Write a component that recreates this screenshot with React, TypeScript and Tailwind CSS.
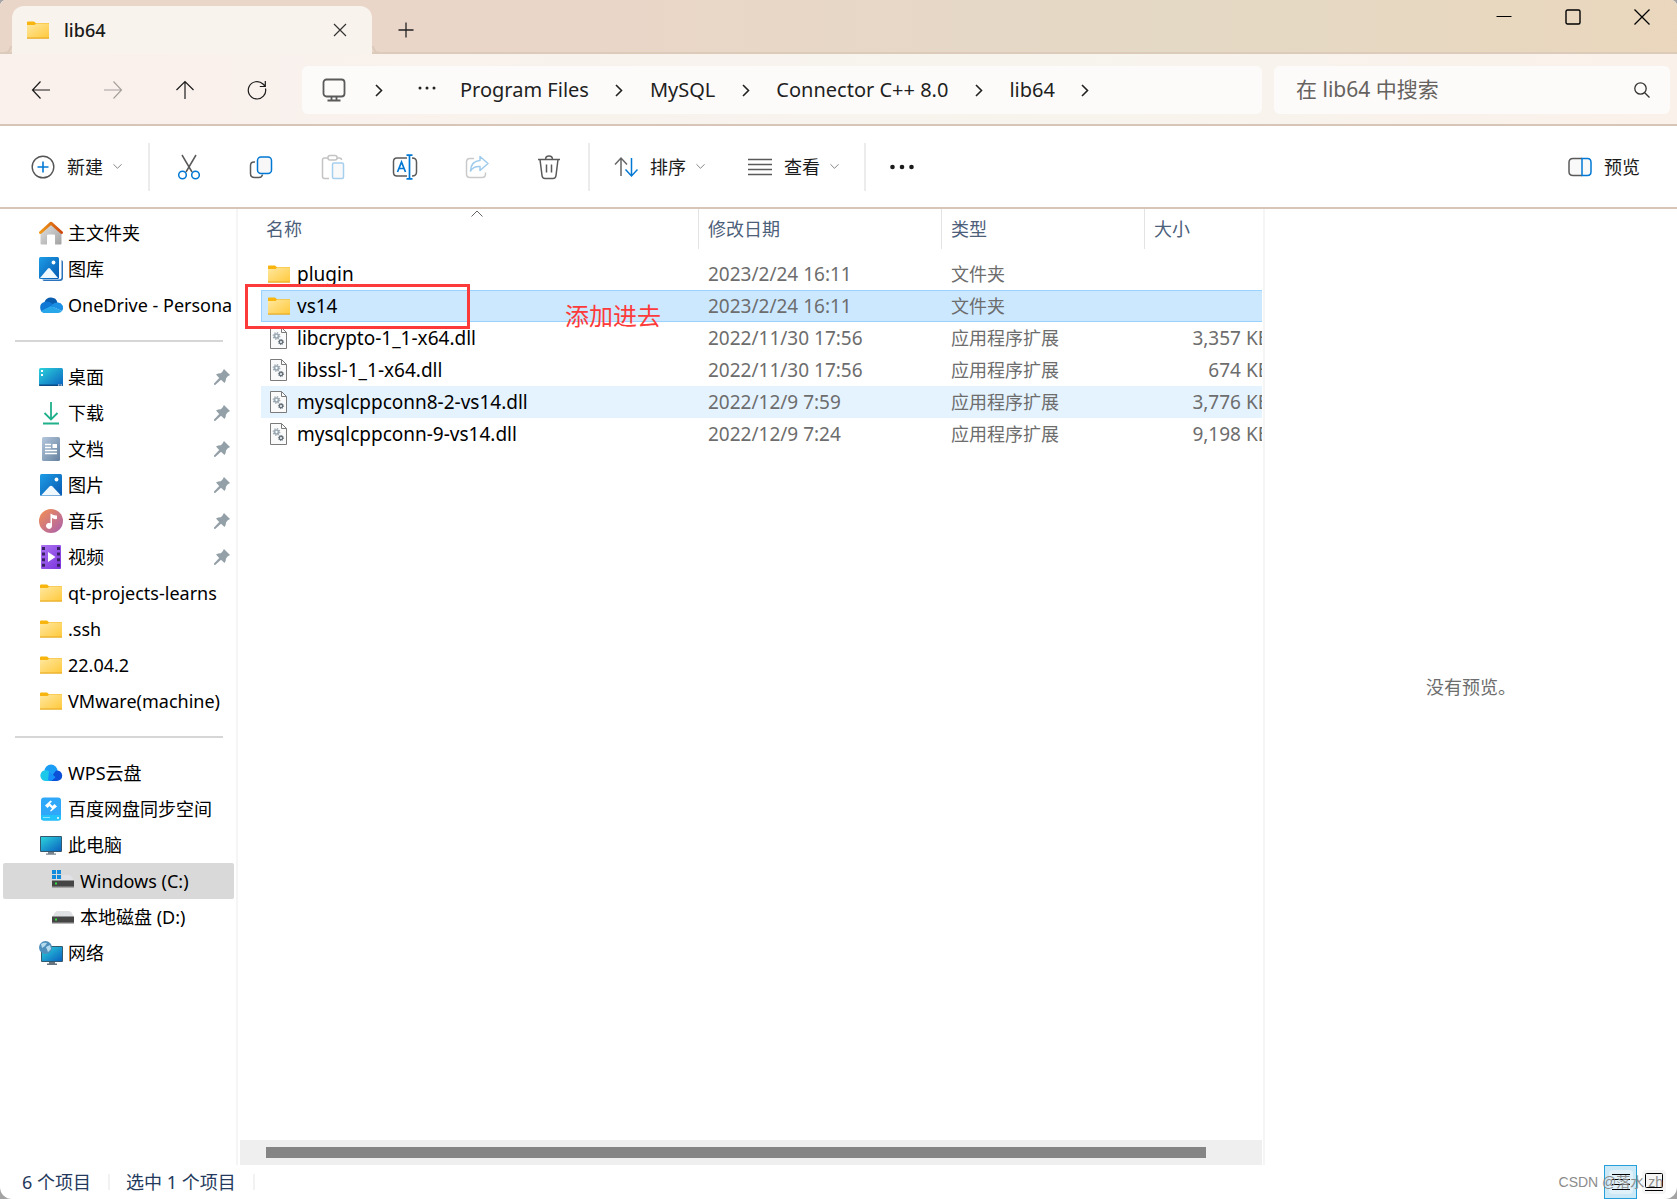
import { ReactNode } from "react";
import clsx from "clsx";

type IconProps = { className?: string };

type SideItem = {
  label: string;
  icon: ReactNode;
  pinned?: boolean;
  nested?: boolean;
  active?: boolean;
};

type FileRow = {
  name: string;
  date: string;
  type: string;
  size?: string;
  state?: "selected" | "hover";
};

const FolderIcon = ({ className = "w-6 h-6" }: IconProps) => (
  <svg viewBox="0 0 24 24" className={clsx("shrink-0", className)}>
    <defs>
      <linearGradient id="folder" x1="0" y1="0" x2="1" y2="1">
        <stop offset="0" stopColor="#ffe8a0" />
        <stop offset="1" stopColor="#ffc93c" />
      </linearGradient>
    </defs>
    <path d="M1 4.5Q1 3.5 2 3.5H8L10 5.2H23V9H1Z" fill="#f8b50f" />
    <path d="M1 7H8.5L10 5.8H23V20H1Z" fill="url(#folder)" />
    <path d="M1 19.5H23V20.7H1Z" fill="#e8a91c" />
  </svg>
);

const HomeIcon = () => (
  <svg viewBox="0 0 24 24" className="w-6 h-6 shrink-0">
    <defs>
      <linearGradient id="roof">
        <stop offset="0" stopColor="#f09a1a" />
        <stop offset="1" stopColor="#cf4a10" />
      </linearGradient>
      <linearGradient id="wall" x1="0" y1="0" x2="1" y2="1">
        <stop offset="0" stopColor="#e2e2e2" />
        <stop offset="1" stopColor="#a2a2a2" />
      </linearGradient>
    </defs>
    <path d="M1.5 12 12 2.5 22.5 12V22.5Q22.5 23.5 21.5 23.5H16V14.5Q16 13.5 15 13.5H9Q8 13.5 8 14.5V23.5H2.5Q1.5 23.5 1.5 22.5Z" fill="url(#wall)" />
    <path d="M1.5 11.5 12 2.2 22.5 11.5" fill="none" stroke="url(#roof)" strokeWidth="3" strokeLinecap="round" strokeLinejoin="round" />
  </svg>
);

const PictureIcon = ({ stacked = false }: { stacked?: boolean }) => (
  <svg viewBox="0 0 24 24" className="w-6 h-6 shrink-0">
    <defs>
      <linearGradient id="picture" x1="0" y1="0" x2="1" y2="1">
        <stop offset="0" stopColor="#1e9de6" />
        <stop offset="1" stopColor="#0658b0" />
      </linearGradient>
    </defs>
    {stacked && <path d="M3.5 23Q4 24 5.5 24H21Q24 24 24 21V5Q24 3.5 22.5 3V20Q22.5 22.5 20 22.5H3.5Z" fill="#2b74bd" />}
    <g transform={stacked ? "translate(-1 -1)" : undefined}>
      <rect x="1" y="1" width={stacked ? 20 : 22} height="22" rx="1.5" fill="url(#picture)" />
      <path d={stacked ? "M2 22 10 12.5Q11 11.5 12 12.5L20 22Z" : "M2 22.5 10.5 13.5Q12 12 13.5 13.5L22 22.5Z"} fill="#f0f8ff" />
      <circle cx={stacked ? 15.5 : 17.5} cy="6.5" r="1.9" fill="#fff" />
    </g>
  </svg>
);

const OneDriveIcon = () => (
  <svg viewBox="0 0 24 24" className="w-6 h-6 shrink-0">
    <path d="M5.5 9A6.800 6.800 0 0 1 18.5 9.500L12 15Z" fill="#0a5cae" />
    <path d="M5.5 9Q9 7.800 12 10L17 13 6 20A5.600 5.600 0 0 1 5.500 9Z" fill="#0f78d4" />
    <path d="M12.5 12.5Q15 9 19 9.500A5.300 5.300 0 0 1 23 18L14 14Z" fill="#1a8fe3" />
    <path d="M2 18 12 13 23 18Q21.5 20 19 20H6Q3.5 20 2 18Z" fill="#28a6ea" />
  </svg>
);

const DesktopIcon = () => (
  <svg viewBox="0 0 24 24" className="w-6 h-6 shrink-0">
    <defs>
      <linearGradient id="screen" x1="0" y1="0" x2="1" y2="1">
        <stop offset="0" stopColor="#2cd3dc" />
        <stop offset="1" stopColor="#0a62c0" />
      </linearGradient>
    </defs>
    <rect y="3" width="24" height="18" rx="1.5" fill="url(#screen)" />
    <path d="M0 19.5H24V20Q24 21 23 21H1Q0 21 0 20Z" fill="#0b4b87" />
    <path d="M2 5H4V7H2ZM2 9H4V11H2ZM19 19.5H20.5V20.5H19ZM21.5 19.5H23V20.5H21.5Z" fill="#fff" />
  </svg>
);

const DownloadIcon = () => (
  <svg viewBox="0 0 24 24" className="w-6 h-6 shrink-0" fill="none" stroke="#20b08c" strokeWidth="1.8">
    <path d="M12 1V18M5.5 12 12 18.5 18.5 12M4 22.5H20" />
  </svg>
);

const DocumentIcon = () => (
  <svg viewBox="0 0 24 24" className="w-6 h-6 shrink-0">
    <defs>
      <linearGradient id="document" x1="0" y1="0" x2="1" y2="1">
        <stop offset="0" stopColor="#b4c7dc" />
        <stop offset="1" stopColor="#64809f" />
      </linearGradient>
    </defs>
    <rect x="3" width="18" height="24" rx="1.5" fill="url(#document)" />
    <path d="M6 7.5H12M6 10.5H12M6 13.5H18M6 16.5H18" stroke="#fff" strokeWidth="1.3" />
    <rect x="13.5" y="7" width="4.5" height="4" fill="#fff" />
  </svg>
);

const MusicIcon = () => (
  <svg viewBox="0 0 24 24" className="w-6 h-6 shrink-0">
    <defs>
      <linearGradient id="music" x1="0" y1="0" x2="1" y2="1">
        <stop offset="0" stopColor="#f59150" />
        <stop offset="1" stopColor="#a85fb0" />
      </linearGradient>
    </defs>
    <circle cx="12" cy="12" r="12" fill="url(#music)" />
    <path d="M11.5 4.5Q15 7 18 6.5V10Q15 10.5 13 9V17A3 3 0 1 1 11.5 14.3Z" fill="#fff" />
  </svg>
);

const VideoIcon = () => (
  <svg viewBox="0 0 24 24" className="w-6 h-6 shrink-0">
    <defs>
      <linearGradient id="video" x1="0" y1="0" x2="1" y2="1">
        <stop offset="0" stopColor="#ad74f2" />
        <stop offset="1" stopColor="#7a34dd" />
      </linearGradient>
    </defs>
    <rect x="2" width="20" height="24" rx="1" fill="url(#video)" />
    <path d="M4.5 2V22M19.5 2V22" stroke="#3a2065" strokeWidth="3" strokeDasharray="3 2.6" />
    <path d="M9 7 16.5 12 9 17Z" fill="#fff" />
  </svg>
);

const WpsIcon = () => (
  <svg viewBox="0 0 24 24" className="w-6 h-6 shrink-0">
    <circle cx="12" cy="10" r="6.5" fill="#1a9df5" />
    <path d="M9 20 17 9.5A5.3 5.3 0 1 1 17.5 20Z" fill="#0c50d8" />
    <path d="M6.5 20A5.4 5.4 0 1 1 11.5 12L16 16Q13 20 9.5 20Z" fill="#1cc8ea" />
    <path d="M10 10.5 16.5 16.5 12 20 9 19Z" fill="#1690fa" />
  </svg>
);

const BaiduIcon = () => (
  <svg viewBox="0 0 24 24" className="w-6 h-6 shrink-0">
    <rect x="2" y="0.5" width="20" height="23" rx="3" fill="#2fa8fa" />
    <path d="M2 18H22V21Q22 23.5 19.5 23.5H4.5Q2 23.5 2 21Z" fill="#22c3fb" />
    <path d="M11.5 3.5 6 8.5 8.500 11 10.500 9 13 11.500 11 14 12 14.500 18 9.500 15.500 7 13.500 9 11 6.500 13 4.500Z" fill="#fff" />
    <path d="M4 20.5H11" stroke="#8fe4ff" />
    <circle cx="19" cy="21" r="1" fill="#fff" />
  </svg>
);

const ComputerIcon = () => (
  <svg viewBox="0 0 24 24" className="w-6 h-6 shrink-0">
    <path d="M9 18H15V20.5H17V21.7H7V20.5H9Z" fill="#77848f" />
    <rect x="1" y="3" width="22" height="16" rx="1" fill="#35586f" />
    <rect x="2" y="4" width="20" height="14" fill="url(#screen)" />
  </svg>
);

const DriveIcon = ({ system = false }: { system?: boolean }) => (
  <svg viewBox="0 0 24 24" className="w-6 h-6 shrink-0">
    <path d="M6 6H18Q19.5 6 20.5 7.5L23 12H1L4 7.5Q5 6 6 6Z" fill="#dfe1e4" />
    <rect x="1" y="11.5" width="22" height="6.5" fill="#454545" />
    <path d="M1 17H23V18.5H1Z" fill="#737373" />
    <rect x="4" y="13.5" width="2" height="2" fill="#30e040" />
    {system && (
      <>
        <path d="M0 0H11V10H0Z" fill="#d9d9d9" />
        <path d="M1 1H5V5H1ZM6 1H10V5H6ZM1 6H5V10H1ZM6 6H10V10H6Z" fill="#118cdc" />
      </>
    )}
  </svg>
);

const NetworkIcon = () => (
  <svg viewBox="0 0 24 24" className="w-6 h-6 shrink-0">
    <path d="M10 20H16V22.5H18V24H8V22.5H10Z" fill="#66747f" />
    <rect x="2" y="5" width="22" height="16" rx="1" fill="#345a70" />
    <rect x="3" y="6" width="20" height="14" fill="url(#screen)" />
    <circle cx="6.5" cy="6.5" r="6.5" fill="#4e8fbb" />
    <path d="M2 3Q5 1 8 2L6 5 3 7ZM7 6 11 4 12 8 9 11Z" fill="#b5dcee" />
  </svg>
);

const PinIcon = () => (
  <svg viewBox="0 0 16 16" className="w-4 h-4 shrink-0" fill="#94a0a8">
    <path d="M10 0 16 6 13.5 7.5 12 9.5Q12 12.5 10.5 14L7 10.8 1.2 16 0 15.8V14.5L5.2 9 2 5.5Q4 4.2 6.8 4.2L8.5 2.5Z" />
  </svg>
);

const DllIcon = () => (
  <svg viewBox="0 0 24 24" className="w-6 h-6 shrink-0" fill="none">
    <path d="M3.5 1.5H14.5L19.5 6.5V22.5H3.5Z" fill="#fafafa" stroke="#7b7b7b" />
    <path d="M14.5 1.5V6.5H19.5" stroke="#7b7b7b" />
    <circle cx="9.500" cy="10" r="2" stroke="#9aa8b3" strokeWidth="1.700" />
    <circle cx="9.500" cy="10" r="3.300" stroke="#9aa8b3" strokeWidth="1.200" strokeDasharray="1.300 1.290" />
    <circle cx="14" cy="16" r="1.700" stroke="#64707a" strokeWidth="1.400" />
    <circle cx="14" cy="16" r="2.600" stroke="#64707a" strokeDasharray="1.020 1.020" />
  </svg>
);

const ChevronDown = () => (
  <svg viewBox="0 0 10 10" className="w-[9px] h-[9px] shrink-0" fill="none" stroke="#777">
    <path d="M0.5 2.5 5 7 9.5 2.5" />
  </svg>
);

const Crumb = ({ label }: { label: string }) => (
  <>
    <button className="whitespace-nowrap">{label}</button>
    <button aria-label="展开" className="w-[61px] flex justify-center">
      <svg viewBox="0 0 8 14" className="w-2 h-3.5" fill="none" stroke="#222" strokeWidth="1.6">
        <path d="M1 2 6.5 7.5 1 13" />
      </svg>
    </button>
  </>
);

const NavButton = ({ label, disabled, children }: { label: string; disabled?: boolean; children: ReactNode }) => (
  <button aria-label={label} disabled={disabled} className="w-[72px] h-12 flex items-center justify-center text-[#1b1b1b] disabled:text-[#a6a09c]">
    <svg viewBox="0 0 20 20" className="w-5 h-5" fill="none" stroke="currentColor" strokeWidth="1.2">
      {children}
    </svg>
  </button>
);

const ToolButton = ({ label, children }: { label: string; children: ReactNode }) => (
  <button aria-label={label} className="w-[72px] h-12 flex items-center justify-center">
    <svg viewBox="0 0 26 26" className="w-[26px] h-[26px]" fill="none" stroke="#5a5a5a" strokeWidth="1.5">
      {children}
    </svg>
  </button>
);

const Divider = () => <span className="w-0.5 h-12 bg-[#ececec] shrink-0" />;

const TitleBar = () => (
  <header className="flex h-[54px] pl-3 border-b-2 border-[#dccabb] bg-linear-to-r from-[#ead6c8] from-35% via-[#e4d9c5] via-70% to-[#ead7bd]">
    <div className="relative mt-1.5 h-12 w-[360px] shrink-0 flex items-center pl-3.5 pr-[25px] rounded-t-xl bg-[#f9f3ed] before:absolute before:right-full before:bottom-0 before:size-2 before:rounded-br-lg before:border-b-2 before:border-r-2 before:border-[#dccabb] after:absolute after:left-full after:bottom-0 after:size-2 after:rounded-bl-lg after:border-b-2 after:border-l-2 after:border-[#dccabb]">
      <FolderIcon />
      <span className="ml-3.5 flex-1 text-lg font-medium text-[#1b1b1b]">lib64</span>
      <button aria-label="关闭标签页">
        <svg viewBox="0 0 14 14" className="w-3.5 h-3.5" stroke="#333" strokeWidth="1.2">
          <path d="M1 1 13 13M13 1 1 13" />
        </svg>
      </button>
    </div>
    <button aria-label="新建标签页" className="ml-[26px] mt-2">
      <svg viewBox="0 0 16 16" className="w-4 h-4" stroke="#222" strokeWidth="1.3">
        <path d="M8 0.5V15.5M0.5 8H15.5" />
      </svg>
    </button>
    <div className="ml-auto flex h-[33px]">
      <button aria-label="最小化" className="w-[70px] flex items-center justify-center">
        <svg viewBox="0 0 16 16" className="w-4 h-4" stroke="#000">
          <path d="M0.5 7.5H15.5" />
        </svg>
      </button>
      <button aria-label="最大化" className="w-[68px] flex items-center justify-center">
        <svg viewBox="0 0 16 16" className="w-4 h-4" fill="none" stroke="#000" strokeWidth="1.4">
          <rect x="1" y="1" width="14" height="14" rx="1.5" />
        </svg>
      </button>
      <button aria-label="关闭" className="w-[70px] flex items-center justify-center">
        <svg viewBox="0 0 16 16" className="w-4 h-4" stroke="#000" strokeWidth="1.3">
          <path d="M0.5 0.5 15.5 15.5M15.5 0.5 0.5 15.5" />
        </svg>
      </button>
    </div>
  </header>
);

const NavBar = () => (
  <nav className="flex items-center h-[72px] pt-0.5 pl-[5px] pr-[7px] border-b-2 border-[#d7c5b7] bg-linear-to-r from-[#faf0ec] via-[#f7f4ee] via-60% to-[#faf1ea]">
    <NavButton label="后退">
      <path d="M19 10H1.5M9.5 1.5 1.5 10 9.5 18.5" />
    </NavButton>
    <NavButton label="前进" disabled>
      <path d="M1 10H18.5M10.5 1.5 18.5 10 10.5 18.5" />
    </NavButton>
    <NavButton label="向上">
      <path d="M10 19V1.5M1.5 10 10 1.5 18.5 10" />
    </NavButton>
    <NavButton label="刷新">
      <path d="M18.5 8.5A8.7 8.7 0 1 1 16 4L18 6M18.3 1V6.5H12.8" />
    </NavButton>
    <div className="ml-[9px] mr-3 h-12 flex-1 min-w-0 flex items-center pl-5 rounded-md bg-[#fcfbf9] text-xl text-[#1f1f1f] overflow-hidden">
      <svg viewBox="0 0 24 24" className="w-6 h-6 shrink-0" fill="none" stroke="#5a5a5a" strokeWidth="1.8">
        <rect x="1.5" y="1.5" width="21" height="17" rx="3" />
        <path d="M9.5 19V22M14.5 19V22M5.5 22.5H18.5" />
      </svg>
      <button aria-label="展开" className="w-[66px] flex justify-center shrink-0">
        <svg viewBox="0 0 8 14" className="w-2 h-3.5" fill="none" stroke="#222" strokeWidth="1.6">
          <path d="M1 2 6.5 7.5 1 13" />
        </svg>
      </button>
      <button aria-label="更多路径" className="w-12 pl-1.5 shrink-0">
        <svg viewBox="0 0 18 4" className="w-[18px] h-1 mb-1" fill="#222">
          <circle cx="2" cy="2" r="1.5" />
          <circle cx="9" cy="2" r="1.5" />
          <circle cx="16" cy="2" r="1.5" />
        </svg>
      </button>
      <Crumb label="Program Files" />
      <Crumb label="MySQL" />
      <Crumb label="Connector C++ 8.0" />
      <Crumb label="lib64" />
    </div>
    <label className="h-12 w-[396px] flex items-center pl-[22px] pr-5 rounded-md bg-[#fcfbf9]">
      <input aria-label="搜索" placeholder="在 lib64 中搜索" className="flex-1 min-w-0 bg-transparent text-[21px] outline-none placeholder:text-[#66625f]" />
      <svg viewBox="0 0 16 16" className="w-4 h-4" fill="none" stroke="#333" strokeWidth="1.3">
        <circle cx="6.5" cy="6.5" r="5.7" />
        <path d="M10.7 10.7 15.5 15.5" />
      </svg>
    </label>
  </nav>
);

const ToolBar = () => (
  <div className="flex items-center h-[83px] pl-[31px] pr-8 border-b-2 border-[#d7c5b7] bg-white text-lg text-[#1b1b1b]">
    <button className="flex items-center h-12 w-[117px] whitespace-nowrap">
      <svg viewBox="0 0 24 24" className="w-6 h-6" fill="none" strokeWidth="1.4">
        <circle cx="12" cy="12" r="10.8" stroke="#555" />
        <path d="M12 6.5V17.5M6.5 12H17.5" stroke="#0078d4" strokeWidth="1.6" />
      </svg>
      <span className="ml-3 mr-2.5">新建</span>
      <ChevronDown />
    </button>
    <Divider />
    <div className="flex ml-[3px] mr-[3px]">
      <ToolButton label="剪切">
        <path d="M6 1 16 18M20 1 10 18" />
        <circle cx="6.5" cy="21" r="3.8" stroke="#0078d4" fill="#fff" />
        <circle cx="19.5" cy="21" r="3.8" stroke="#0078d4" fill="#fff" />
      </ToolButton>
      <ToolButton label="复制">
        <path d="M7 8H6Q2.5 8 2.5 11.5V19.5Q2.5 23.5 6.5 23.5H11Q14 23.5 14.5 20.5" />
        <rect x="9.5" y="3" width="14" height="16.5" rx="3.5" stroke="#0078d4" fill="#f7f7f7" />
      </ToolButton>
      <ToolButton label="粘贴">
        <g stroke="#c4c4c4">
          <path d="M8 4H4.5Q2.5 4 2.5 6V22.5Q2.5 24.5 4.5 24.5H9M17 4H19.5Q21.5 4 21.5 6" />
          <rect x="8" y="1.5" width="9" height="4.5" rx="2" />
        </g>
        <rect x="12.5" y="9" width="11" height="15.5" rx="1.5" stroke="#a6cfee" fill="#f9f9f9" />
      </ToolButton>
      <ToolButton label="重命名">
        <path d="M15 4H5Q1.5 4 1.5 7.5V18.5Q1.5 22 5 22H15M20 4Q24.5 4 24.5 8V18Q24.5 22 20 22" />
        <path d="M5.5 18 9.5 8 13.5 18M7 14.5H12M17.5 1V25M14.5 1.2H20.5M14.5 24.8H20.5" stroke="#0078d4" strokeWidth="1.7" />
      </ToolButton>
      <ToolButton label="共享">
        <path d="M10 4.5H6Q2.5 4.5 2.5 8V20Q2.5 23.5 6 23.5H18Q21.5 23.5 21.5 20V18.5" stroke="#c9c9c9" />
        <path d="M16 2.5 24 9.5 16 16.5V12.5Q9.5 12 6.5 17Q7 7 16 6.5Z" stroke="#9fcbec" strokeLinejoin="round" />
      </ToolButton>
      <ToolButton label="删除">
        <path d="M2 5.5H24M9.5 5.5Q9.5 2 13 2T16.5 5.5M4 5.5 6 21.5Q6.3 24.5 9 24.5H17Q19.7 24.5 20 21.5L22 5.5M10.5 10.5V18.5M15.5 10.5V18.5" />
      </ToolButton>
    </div>
    <Divider />
    <button className="flex items-center h-12 ml-6 w-[134px] whitespace-nowrap">
      <svg viewBox="0 0 24 24" className="w-6 h-6" fill="none" strokeWidth="1.5">
        <path d="M7 21V3M1 9.5 7 3 13 9.5" stroke="#666" />
        <path d="M17.5 3V21M11.5 14.5 17.5 21 23.5 14.5" stroke="#0078d4" />
      </svg>
      <span className="ml-3 mr-2.5">排序</span>
      <ChevronDown />
    </button>
    <button className="flex items-center h-12 w-[116px] whitespace-nowrap">
      <svg viewBox="0 0 24 24" className="w-6 h-6" stroke="#5a5a5a" strokeWidth="1.3">
        <path d="M0 4.5H24M0 9.5H24M0 14.5H24M0 19.5H24" />
      </svg>
      <span className="ml-3 mr-2.5">查看</span>
      <ChevronDown />
    </button>
    <Divider />
    <button aria-label="更多" className="ml-6 h-12">
      <svg viewBox="0 0 24 6" className="w-6 h-1.5" fill="#1b1b1b">
        <circle cx="2.5" cy="3" r="2.3" />
        <circle cx="12" cy="3" r="2.3" />
        <circle cx="21.5" cy="3" r="2.3" />
      </svg>
    </button>
    <button className="ml-auto mr-[5px] flex items-center h-12 whitespace-nowrap">
      <svg viewBox="0 0 24 24" className="w-6 h-6" fill="#f9f9f9" strokeWidth="1.5">
        <path d="M14 3.5H5Q1 3.5 1 7.5V16.5Q1 20.5 5 20.5H14" stroke="#5a5a5a" />
        <path d="M14 3.5H19.5Q23 3.5 23 7.5V16.5Q23 20.5 19.5 20.5H14Z" stroke="#0078d4" />
      </svg>
      <span className="ml-3">预览</span>
    </button>
  </div>
);

const sideGroups: SideItem[][] = [
  [
    { label: "主文件夹", icon: <HomeIcon /> },
    { label: "图库", icon: <PictureIcon stacked /> },
    { label: "OneDrive - Persona", icon: <OneDriveIcon /> },
  ],
  [
    { label: "桌面", icon: <DesktopIcon />, pinned: true },
    { label: "下载", icon: <DownloadIcon />, pinned: true },
    { label: "文档", icon: <DocumentIcon />, pinned: true },
    { label: "图片", icon: <PictureIcon />, pinned: true },
    { label: "音乐", icon: <MusicIcon />, pinned: true },
    { label: "视频", icon: <VideoIcon />, pinned: true },
    { label: "qt-projects-learns", icon: <FolderIcon /> },
    { label: ".ssh", icon: <FolderIcon /> },
    { label: "22.04.2", icon: <FolderIcon /> },
    { label: "VMware(machine)", icon: <FolderIcon /> },
  ],
  [
    { label: "WPS云盘", icon: <WpsIcon /> },
    { label: "百度网盘同步空间", icon: <BaiduIcon /> },
    { label: "此电脑", icon: <ComputerIcon /> },
    { label: "Windows (C:)", icon: <DriveIcon system />, nested: true, active: true },
    { label: "本地磁盘 (D:)", icon: <DriveIcon />, nested: true },
    { label: "网络", icon: <NetworkIcon /> },
  ],
];

const SideBar = () => (
  <aside className="w-[238px] shrink-0 pt-1.5 border-r-2 border-[#f5f5f5] text-lg text-black">
    {sideGroups.map((group, i) => (
      <div key={i}>
        {i > 0 && <hr className="my-[17px] ml-[15px] mr-[13px] border-t-2 border-[#d6d6d6]" />}
        <ul className="pl-[3px] pr-0.5">
          {group.map((item) => (
            <li key={item.label}>
              <a
                href="#"
                className={clsx(
                  "flex items-center h-9 rounded-xs",
                  item.nested ? "pl-12" : "pl-9",
                  item.active && "bg-[#d9d9d9]"
                )}
              >
                {item.icon}
                <span className="ml-[5px] flex-1 whitespace-nowrap">{item.label}</span>
                {item.pinned && (
                  <span className="mr-1">
                    <PinIcon />
                  </span>
                )}
              </a>
            </li>
          ))}
        </ul>
      </div>
    ))}
  </aside>
);

const files: FileRow[] = [
  { name: "plugin", date: "2023/2/24 16:11", type: "文件夹" },
  { name: "vs14", date: "2023/2/24 16:11", type: "文件夹", state: "selected" },
  { name: "libcrypto-1_1-x64.dll", date: "2022/11/30 17:56", type: "应用程序扩展", size: "3,357 KB" },
  { name: "libssl-1_1-x64.dll", date: "2022/11/30 17:56", type: "应用程序扩展", size: "674 KB" },
  { name: "mysqlcppconn8-2-vs14.dll", date: "2022/12/9 7:59", type: "应用程序扩展", size: "3,776 KB", state: "hover" },
  { name: "mysqlcppconn-9-vs14.dll", date: "2022/12/9 7:24", type: "应用程序扩展", size: "9,198 KB" },
];

const FileList = () => (
  <main className="relative flex-1 min-w-0 flex flex-col">
    <div className="flex-1 ml-[23px] mr-px overflow-hidden">
      <table className="table-fixed w-[calc(100%+8px)] text-left text-[19px] text-[#6d6d6d]">
        <thead>
          <tr className="text-lg text-[#4c607a]">
            <th className="p-0 pb-[9px] font-normal">
              <div className="flex items-center h-10 pl-[5px]">名称</div>
            </th>
            <th className="w-[243px] p-0 pb-[9px] font-normal">
              <div className="flex items-center h-10 pl-[9px] border-l border-[#e3e3e3]">修改日期</div>
            </th>
            <th className="w-[203px] p-0 pb-[9px] font-normal">
              <div className="flex items-center h-10 pl-[9px] border-l border-[#e3e3e3]">类型</div>
            </th>
            <th className="w-[126px] p-0 pb-[9px] font-normal">
              <div className="flex items-center h-10 pl-[9px] border-l border-[#e3e3e3]">大小</div>
            </th>
          </tr>
        </thead>
        <tbody>
          {files.map(({ name, date, type, size, state }) => (
            <tr
              key={name}
              className={clsx(
                "h-8",
                state === "selected" && "bg-[#cce8ff] outline outline-[#99d1ff] -outline-offset-1",
                state === "hover" && "bg-[#e5f3ff]"
              )}
            >
              <td className="p-0 pl-1.5 text-black">
                <div className="flex items-center gap-1.5 h-8">
                  {size ? <DllIcon /> : <FolderIcon />}
                  {name}
                </div>
              </td>
              <td className="p-0 pl-2.5">{date}</td>
              <td className="p-0 pl-2.5 text-lg leading-8">{type}</td>
              <td className="p-0 text-right whitespace-nowrap">{size}</td>
            </tr>
          ))}
        </tbody>
      </table>
    </div>
    <div className="h-[25px] ml-0.5 mr-px pl-[26px] pr-14 py-[7px] bg-[#efefef]">
      <div className="h-[11px] bg-[#858585]" />
    </div>

    {/* sort direction marker and the note drawn over the list */}
    <svg viewBox="0 0 12 7" className="absolute left-[233px] top-px w-3 h-[7px]" fill="none" stroke="#666">
      <path d="M0.5 6.5 6 1 11.5 6.5" />
    </svg>
    <div className="absolute left-[7px] top-[75px] w-[225px] h-[45px] border-3 border-[#fd3a3a]" />
    <p className="absolute left-[327px] top-[91px] text-2xl leading-8 text-[#fd3a3a]">添加进去</p>
  </main>
);

const StatusBar = () => (
  <footer className="relative flex items-center h-[34px] pl-[22px] pr-[7px] text-lg text-[#24395c]">
    <span>6 个项目</span>
    <span className="ml-[17px] mr-4 w-0.5 h-4 bg-[#f2f2f2]" />
    <span>选中 1 个项目</span>
    <span className="ml-[17px] w-0.5 h-4 bg-[#f2f2f2]" />
    <button aria-label="详细信息" className="ml-auto w-[33px] h-[34px] flex items-center justify-center border border-[#26a0da] bg-[#cbe8f6]">
      <span className="p-[3px] rounded-sm bg-white/40">
        <svg viewBox="0 0 18 18" className="w-[18px] h-[18px]" stroke="#000">
          <path d="M0 1.5H18M0 6.5H18M0 11.5H18M0 16.5H18" />
        </svg>
      </span>
    </button>
    <button aria-label="大图标" className="w-[33px] h-[34px] flex items-center justify-center">
      <span className="p-[3px] rounded-sm bg-[#f5f5f5]">
        <svg viewBox="0 0 18 18" className="w-[18px] h-[18px]" fill="none" stroke="#000">
          <rect x="0.5" y="0.5" width="17" height="14" rx="1" />
          <path d="M0 17.5H18" />
        </svg>
      </span>
    </button>
    <span className="absolute right-3.5 top-[7px] text-sm leading-5 text-[#8c8c8c] whitespace-nowrap font-['Liberation_Sans','Noto_Sans_CJK_SC',sans-serif]">
      CSDN @落水 zh
    </span>
  </footer>
);

export default function App() {
  return (
    <div className="bg-[#a3a3a3]">
      <div className="min-h-screen flex flex-col overflow-hidden rounded-t-md rounded-b-xl bg-white font-['Noto_Sans','Noto_Sans_CJK_SC',sans-serif]">
        <TitleBar />
        <NavBar />
        <ToolBar />
        <div className="flex-1 flex">
          <SideBar />
          <FileList />
          <section className="w-[414px] shrink-0 flex items-center justify-center border-l-2 border-[#f5f5f5] text-lg text-[#6d6d6d]">
            没有预览。
          </section>
        </div>
        <StatusBar />
      </div>
    </div>
  );
}
